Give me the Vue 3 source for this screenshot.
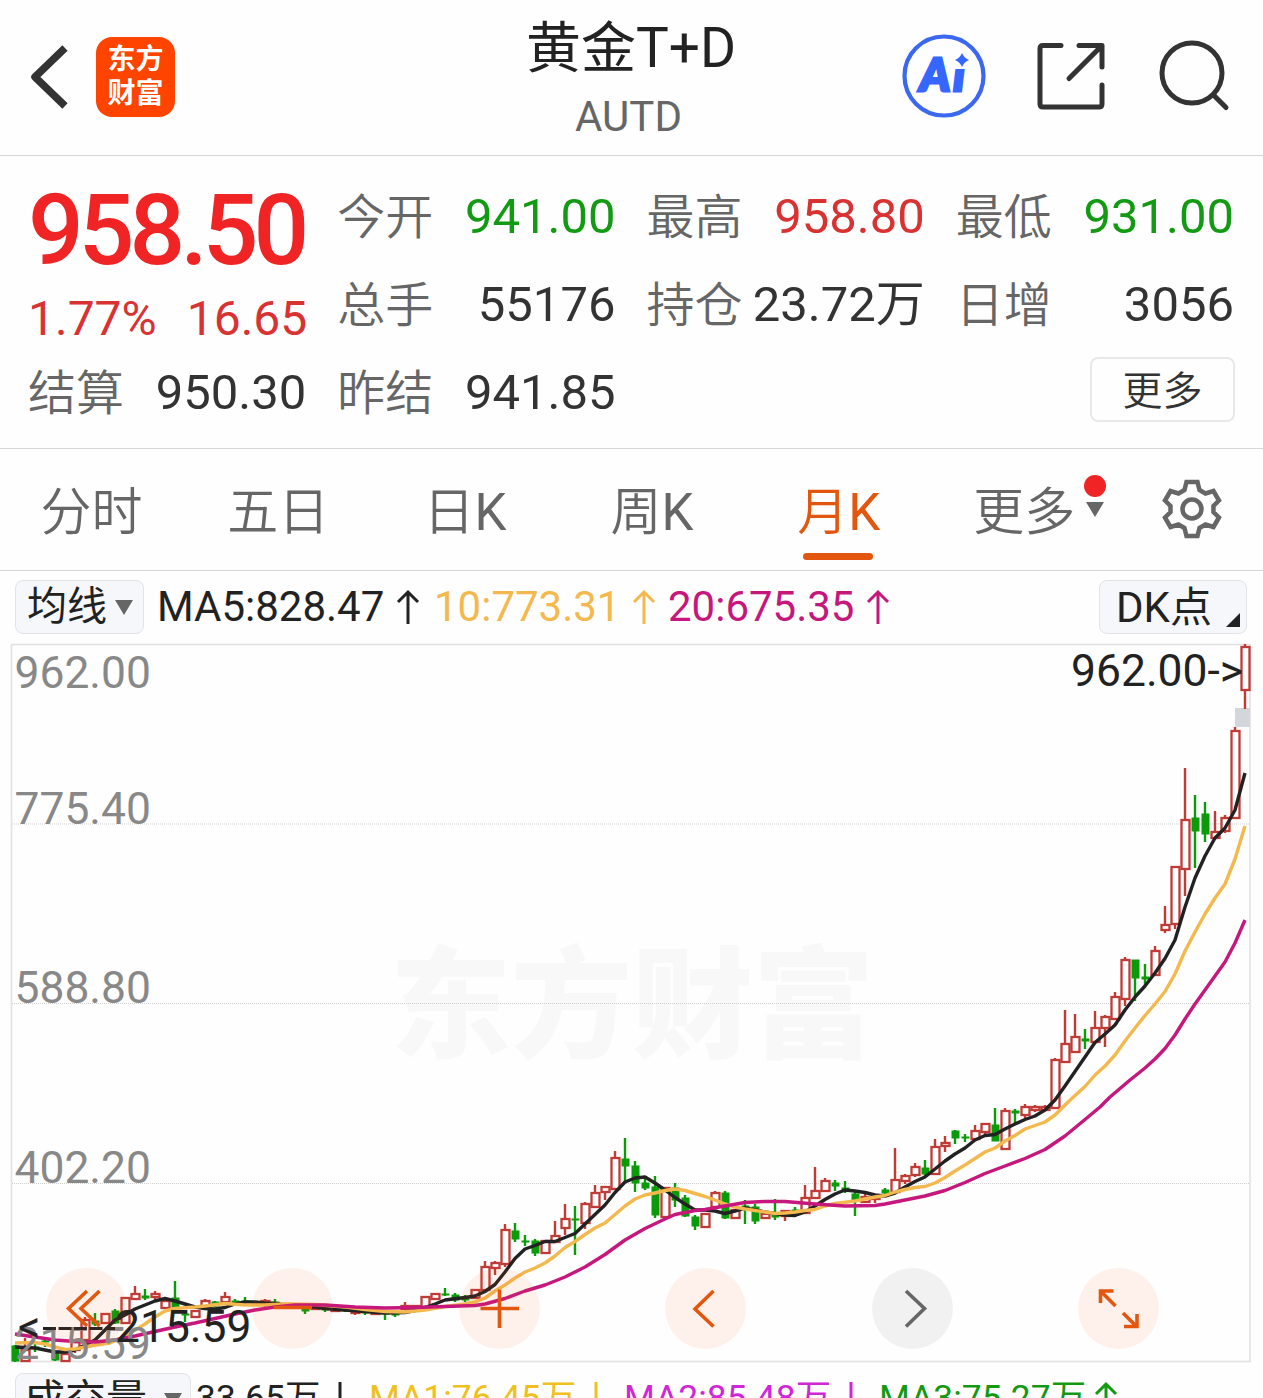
<script setup>
    import { ref } from 'vue';

    // 行情数据，color 对应下面的 class 名
    const quotes = [
        { label: '今开', value: '941.00', color: 'green' },
        { label: '最高', value: '958.80', color: 'red' },
        { label: '最低', value: '931.00', color: 'green' },
        { label: '总手', value: '55176' },
        { label: '持仓', value: '23.72万' },
        { label: '日增', value: '3056' },
        { label: '结算', value: '950.30' },
        { label: '昨结', value: '941.85' }
    ]

    // 周期：中文和字母K的字重不同，所以分开放
    const tabs = [
        { text: '分时' },
        { text: '五日' },
        { text: '日', unit: 'K' },
        { text: '周', unit: 'K' },
        { text: '月', unit: 'K' }
    ]
    const active = ref(4)

    // 纵轴刻度：文字和基线位置
    const axis = [
        { text: '962.00', y: 688 },
        { text: '775.40', y: 824 },
        { text: '588.80', y: 1003 },
        { text: '402.20', y: 1183 },
        { text: '215.59', y: 1359 }
    ]

    // K线：涨跌, 最高, 实体上沿, 实体下沿, 最低，每根间隔10
    const rows = `g 1345 1346 1361 1362|r 1338 1350 1361 1361|g 1343 1347 1348 1352|g 1338 1341 1342 1347|g 1350 1351 1360 1361
r 1353 1354 1361 1361|r 1340 1342 1350 1353|r 1317 1320 1340 1342|g 1313 1321 1324 1326|r 1313 1314 1323 1323
g 1309 1311 1323 1324|r 1297 1298 1323 1323|r 1286 1294 1299 1299|g 1289 1296 1298 1300|r 1291 1294 1297 1300
r 1301 1301 1308 1308|g 1281 1298 1307 1308|g 1312 1314 1315 1322|r 1310 1311 1317 1317|r 1299 1301 1308 1308
g 1301 1302 1306 1307|r 1292 1297 1302 1302|g 1299 1301 1304 1306|g 1297 1301 1303 1305|g 1301 1302 1304 1306
r 1299 1301 1303 1307|g 1299 1302 1304 1308|r 1303 1304 1307 1309|g 1303 1305 1307 1309|g 1304 1307 1311 1314
r 1305 1307 1309 1310|g 1305 1308 1310 1312|r 1307 1309 1311 1311|g 1307 1309 1311 1312|r 1309 1311 1313 1315
g 1309 1311 1313 1315|r 1311 1312 1314 1315|g 1311 1312 1314 1320|g 1311 1313 1315 1317|r 1302 1306 1309 1309
r 1305 1306 1308 1309|r 1297 1297 1307 1307|r 1293 1294 1299 1300|g 1288 1294 1295 1296|g 1293 1295 1300 1302
g 1295 1297 1300 1302|r 1289 1290 1298 1299|r 1261 1267 1290 1291|r 1261 1263 1268 1275|r 1224 1230 1264 1267
g 1223 1231 1239 1242|g 1235 1241 1242 1246|g 1239 1241 1253 1256|r 1241 1241 1253 1253|r 1221 1236 1242 1242
r 1204 1219 1228 1235|g 1206 1219 1220 1255|r 1202 1204 1223 1229|r 1185 1193 1207 1207|r 1187 1187 1192 1200
r 1151 1158 1189 1189|g 1138 1159 1166 1182|g 1161 1166 1183 1192|g 1177 1183 1188 1190|g 1176 1187 1215 1218
r 1188 1188 1217 1217|g 1183 1188 1200 1207|g 1195 1198 1216 1217|g 1215 1217 1226 1230|r 1213 1214 1227 1227
r 1191 1193 1207 1207|g 1191 1193 1218 1219|r 1209 1210 1218 1218|g 1200 1206 1208 1224|g 1204 1207 1221 1224
r 1213 1214 1218 1219|g 1199 1214 1217 1220|r 1210 1211 1216 1221|g 1207 1210 1214 1216|r 1185 1198 1213 1213
r 1167 1191 1198 1199|r 1178 1181 1191 1192|g 1180 1183 1186 1191|g 1181 1188 1190 1193|g 1192 1194 1200 1216
r 1192 1197 1202 1202|r 1194 1197 1199 1203|g 1188 1190 1193 1197|r 1148 1180 1192 1193|r 1174 1176 1181 1184
r 1163 1167 1175 1177|g 1160 1168 1174 1177|r 1139 1147 1174 1174|r 1136 1143 1146 1152|g 1130 1131 1138 1144
g 1134 1137 1138 1142|r 1125 1131 1139 1139|r 1123 1124 1132 1135|g 1108 1125 1141 1141|r 1108 1111 1149 1149
g 1109 1111 1113 1123|r 1104 1107 1115 1118|r 1105 1107 1110 1112|r 1105 1107 1110 1110|r 1058 1060 1108 1108
r 1010 1044 1062 1062|r 1014 1037 1052 1052|g 1029 1039 1041 1049|r 1011 1028 1042 1042|r 1015 1017 1028 1047
r 992 997 1019 1019|r 957 960 999 1006|g 960 960 978 1001|g 964 977 979 985|r 946 951 975 975
r 906 925 930 933|r 867 867 924 929|r 768 820 869 896|g 795 818 831 868|g 802 814 834 842
r 811 832 838 838|r 815 818 831 833|r 727 731 818 818|r 644 647 690 709`

    const candles = rows.split(/[|\n]/).map((row, i) => {
        const [type, ...nums] = row.trim().split(' ')
        const [high, top, bottom, low] = nums.map(Number)
        return { up: type === 'r', x: 15 + i * 10, high, top, bottom, low }
    })

    // 三条均线
    const ma5 = '15,1347 35,1348 55,1352 65,1352 75,1350 85,1345 95,1340 105,1330 115,1320 125,1315 135,1309 145,1305 155,1301 165,1298.5 175,1301 185,1304 195,1307 205,1308.5 215,1309 225,1307.5 235,1304 245,1302 255,1302 265,1303 275,1303.5 285,1305 300,1307 315,1307 325,1308.5 345,1310 365,1311.5 385,1313 405,1312.5 415,1310.5 425,1307.5 435,1304 445,1300 465,1297.5 475,1296 485,1291.5 495,1284.5 505,1272 515,1258.5 525,1249 535,1245.5 545,1241.5 555,1241.5 565,1237.5 575,1233.5 585,1224 595,1214.5 605,1205 615,1192.5 625,1182 635,1178 645,1177 655,1183 665,1190 675,1197.5 685,1204 695,1210 705,1210 715,1211 725,1213.5 735,1211 745,1208 755,1210 765,1212 785,1215 795,1215.5 805,1212 815,1206 825,1199.5 835,1194 845,1190 855,1191 865,1192.5 875,1195 885,1196 895,1193 905,1187 915,1181.5 925,1177 935,1169 945,1161 955,1154 965,1148 975,1140 985,1135.5 995,1134.5 1005,1129 1015,1124 1025,1119.5 1035,1116 1045,1110 1055,1100 1065,1086 1075,1071.5 1085,1057 1095,1042.5 1105,1034 1115,1025 1125,1010 1135,997 1145,986 1155,973 1165,958.5 1175,940 1185,907 1195,878 1205,856 1215,838 1225,828 1235,810 1245,773'
    const ma10 = '15,1343 35,1342.5 45,1344 55,1347 65,1349.5 75,1349 85,1347 95,1345 110,1343 125,1336 135,1330 145,1324 155,1317 165,1311 175,1308.5 195,1307 205,1306 225,1303.5 245,1305 265,1305 285,1304 315,1304.5 345,1307 365,1309.5 385,1311.5 405,1312 425,1310 445,1306.5 465,1304 475,1302 485,1298 495,1291 505,1285 515,1278 525,1272 535,1268 545,1263 555,1256 565,1247.5 575,1241.5 585,1234.5 595,1228 605,1223 615,1214.5 625,1206 635,1199 645,1195 655,1193 665,1190.5 675,1189 685,1190.5 695,1193.5 705,1196.5 715,1200 725,1204 735,1207 745,1209 755,1210.5 765,1212 775,1213.5 785,1213 795,1212 805,1210.5 815,1209.5 825,1206 835,1203.5 855,1201 875,1197 885,1195.5 895,1192 905,1189.5 915,1187.5 925,1186.5 935,1183 945,1177.5 955,1171 965,1165 975,1158.5 985,1152 995,1148 1005,1141 1015,1135.5 1025,1129 1035,1125.5 1045,1122 1055,1115 1065,1105 1075,1095.5 1085,1086.5 1095,1075 1105,1066 1115,1055 1125,1041 1135,1028 1145,1015.5 1155,1004 1165,991.5 1175,974 1185,951 1195,932 1205,914 1215,898 1225,884 1235,859 1245,826'
    const ma20 = '15,1334 35,1337 55,1340 75,1341.5 95,1342 115,1340 135,1336 155,1331.5 175,1327 195,1323 215,1318.5 235,1314 255,1310 275,1307 295,1305 325,1305 355,1307 385,1308 415,1307.5 445,1306.5 475,1305.5 485,1304 505,1298.5 525,1291 545,1285 565,1277 585,1267 605,1254.5 625,1240 645,1228.5 665,1219 675,1214.5 695,1210.5 705,1209.5 725,1206 745,1202.5 765,1201.5 785,1201.5 815,1204 845,1206 875,1205.5 885,1204 905,1200 925,1196 945,1190.5 965,1182.5 985,1173.5 1005,1166 1025,1158.5 1045,1149.5 1065,1136 1085,1119.5 1100,1107 1110,1097 1130,1080 1145,1068 1155,1059 1165,1048.5 1175,1035 1185,1019 1195,1004 1205,990 1215,976 1225,962 1235,943 1245,920'

    // 图表底部的操作按钮，图标画在 81x81 的格子里
    const tools = [
        { name: 'first', d: 'M41 23 L22.5 40.5 L41 58 M53.5 23 L35 40.5 L53.5 58' },
        { name: 'minus', d: 'M21.5 39.5 H60' },
        { name: 'plus', d: 'M21.5 40.5 H60 M40.5 21.5 V60' },
        { name: 'prev', d: 'M48.5 23 L30 41 L48.5 58.5' },
        { name: 'next', d: 'M34 23 L52.5 40.5 L34 58.5', gray: true },
        { name: 'full', d: 'M22.5 35 V23 H35.5 M23 23.5 L37.5 38 M45 45 L58.5 58.5 M59 46 V58.5 H46' }
    ]

    const volumes = [
        { text: '33.65万', color: 'dark' },
        { text: 'MA1:76.45万', color: 'gold' },
        { text: 'MA2:85.48万', color: 'violet' },
        { text: 'MA3:75.27万', color: 'green', up: true }
    ]
</script>


<template>
    <div class="page">
        <!-- 顶部标题栏 -->
        <header class="header">
            <div class="left">
                <svg class="back" width="48" height="80" viewBox="0 0 48 80">
                    <path d="M45 11 L15 40 L45 69" fill="none" stroke="#333" stroke-width="7.5" stroke-linejoin="round"/>
                </svg>
                <div class="logo"><span>东方</span><span>财富</span></div>
            </div>
            <div class="title">
                <div class="name">黄金T+D</div>
                <div class="code">AUTD</div>
            </div>
            <div class="actions">
                <svg width="84" height="84" viewBox="0 0 84 84">
                    <text class="ai" x="18" y="57">Ai</text>
                    <rect x="51" y="14" width="19" height="21" fill="#fefefe"/>
                    <path d="M60 19 Q62 24 67 26 Q62 28 60 33 Q58 28 53 26 Q58 24 60 19z" fill="#3566ff"/>
                    <circle cx="42" cy="42" r="39.5" fill="none" stroke="#3a68f0" stroke-width="4.2"/>
                </svg>
                <svg class="share" width="72" height="72" viewBox="0 0 72 72">
                    <path d="M26 5.5 H8 Q5 5.5 5 8.5 V64 Q5 67 8 67 H64 Q67 67 67 64 V45 M44 5.5 H67 V27 M66 6.5 L34 38.5" fill="none" stroke="#333" stroke-width="5" stroke-linecap="round" stroke-linejoin="round"/>
                </svg>
                <svg class="search" width="74" height="74" viewBox="0 0 74 74">
                    <circle cx="36" cy="34" r="30" fill="none" stroke="#333" stroke-width="5"/>
                    <path d="M57.5 56 L70 68.5" stroke="#333" stroke-width="5" stroke-linecap="round"/>
                </svg>
            </div>
        </header>

        <!-- 行情面板 -->
        <section class="quote">
            <div class="price">
                <div class="big">958.50</div>
                <div class="change"><span>1.77%</span><span>16.65</span></div>
            </div>
            <div v-for="item in quotes" :key="item.label" class="cell">
                <span class="label">{{ item.label }}</span>
                <span :class="['value', item.color]">{{ item.value }}</span>
            </div>
            <div class="more"><button>更多</button></div>
        </section>

        <!-- 周期切换 -->
        <nav class="tabs">
            <div v-for="(tab,index) in tabs" :key="index" :class="index === active ? 'tab active' : 'tab'" @click="active = index">{{ tab.text }}<span v-if="tab.unit" class="unit">{{ tab.unit }}</span></div>
            <div class="tab-more">
                <span>更多</span>
                <div class="marks">
                    <i class="dot"></i>
                    <i class="triangle"></i>
                </div>
            </div>
            <svg class="gear" width="64" height="64" viewBox="1159.5 477.5 64 64">
                <path d="M1186 482.5H1197L1199 490.5L1205 494L1213 491.5L1218.5 501L1213 506.5V512.5L1218.5 518L1213 527.5L1205 525L1199 528.5L1197 536.5H1186L1184 528.5L1178 525L1170 527.5L1164.5 518L1170 512.5V506.5L1164.5 501L1170 491.5L1178 494L1184 490.5Z" fill="none" stroke="#666" stroke-width="4.5"/>
                <circle cx="1191.5" cy="509.5" r="9.5" fill="none" stroke="#666" stroke-width="4.5"/>
            </svg>
        </nav>

        <!-- 均线数值 -->
        <div class="ma-bar">
            <div class="select">均线<i class="triangle"></i></div>
            <div class="ma dark">
                <span>MA5:828.47</span>
                <svg width="24" height="36" viewBox="0 0 24 36"><path d="M12 35V3M2 13L12 3L22 13"/></svg>
            </div>
            <div class="ma yellow">
                <span>10:773.31</span>
                <svg width="24" height="36" viewBox="0 0 24 36"><path d="M12 35V3M2 13L12 3L22 13"/></svg>
            </div>
            <div class="ma pink">
                <span>20:675.35</span>
                <svg width="24" height="36" viewBox="0 0 24 36"><path d="M12 35V3M2 13L12 3L22 13"/></svg>
            </div>
            <div class="dk">DK点<i class="corner"></i></div>
        </div>

        <!-- K线图 -->
        <div class="chart">
            <svg width="1263" height="720" viewBox="0 643 1263 720">
                <text class="watermark" x="390" y="1048" textLength="484">东方财富</text>
                <path d="M12 824H1250M12 1003.5H1250M12 1183.5H1250" stroke="#cfcfcf" stroke-dasharray="1 1"/>
                <rect x="11.5" y="644.5" width="1238.5" height="717" fill="none" stroke="#e2e2e2" stroke-width="1.6"/>
                <rect x="1235" y="708" width="15" height="19" fill="#d3d6db"/>
                <g v-for="c in candles" :key="c.x">
                    <template v-if="c.up">
                        <path :d="`M${c.x} ${c.high}V${c.top}M${c.x} ${c.bottom}V${c.low}`" stroke="#c03a36" stroke-width="2.4"/>
                        <rect :x="c.x - 3.5" :y="c.top" width="8" :height="c.bottom - c.top" fill="#fefefe" stroke="#c03a36" stroke-width="2.3"/>
                    </template>
                    <template v-else>
                        <path :d="`M${c.x} ${c.high}V${c.low}`" stroke="#0a9a0a" stroke-width="2.4"/>
                        <rect :x="c.x - 3.5" :y="c.top - 0.5" width="8" :height="c.bottom - c.top + 1" fill="#0a9a0a"/>
                    </template>
                </g>
                <g class="lines">
                    <polyline :points="ma5" stroke="#222"/>
                    <polyline :points="ma10" stroke="#f3b94e"/>
                    <polyline :points="ma20" stroke="#c5177c"/>
                </g>
                <text v-for="a in axis" :key="a.text" class="axis" x="14.5" :y="a.y">{{ a.text }}</text>
                <text class="peak" x="1243" y="686" text-anchor="end">962.00-&gt;</text>
                <text class="peak" x="18" y="1342">&lt;</text>
                <path d="M43 1328.5H115" stroke="#222" stroke-width="3" stroke-dasharray="13 2.5"/>
                <text class="peak" x="115" y="1342">215.59</text>
            </svg>
            <div class="tools">
                <div v-for="t in tools" :key="t.name" :class="t.gray ? 'tool gray' : 'tool'">
                    <svg width="81" height="81" viewBox="0 0 81 81"><path :d="t.d"/></svg>
                </div>
            </div>
        </div>

        <!-- 成交量 -->
        <div class="volume">
            <div class="select">成交量<i class="triangle"></i></div>
            <div v-for="v in volumes" :key="v.text" :class="['vol', v.color]">
                <span>{{ v.text }}</span>
                <svg width="24" height="36" viewBox="0 0 24 36">
                    <path :d="v.up ? 'M12 35V3M2 13L12 3L22 13' : 'M12 1V33M2 23L12 33L22 23'"/>
                </svg>
            </div>
        </div>
    </div>
</template>


<style>
    body{
        background: #fefefe;
    }
</style>

<style scoped>
    .page{
        width: 1263px;
        height: 1398px;
        overflow: hidden;
        background: #fefefe;
        color: #333;
        font-family: Roboto, "Noto Sans CJK SC", sans-serif;
    }
    .header{
        display: flex;
        justify-content: space-between;
        height: 155px;
        border-bottom: 1px solid #d6d6d6;
    }
    .left{
        display: flex;
        width: 360px;
        padding: 37px 0 0 20px;
        box-sizing: border-box;
    }
    .logo{
        display: flex;
        flex-direction: column;
        justify-content: center;
        align-items: center;
        width: 79px;
        height: 80px;
        margin-left: 28px;
        border-radius: 16px;
        background: #ff4400;
        color: #fff;
        font-size: 28px;
        font-weight: 700;
        line-height: 34px;
    }
    .title{
        text-align: center;
    }
    .name{
        margin-top: 12px;
        font-size: 55px;
        font-weight: 370;
        line-height: 72px;
        color: #222;
    }
    .code{
        margin-top: 8px;
        font-size: 42px;
        line-height: 50px;
        color: #666;
        margin-right: 5px;
    }
    .actions{
        display: flex;
        width: 361px;
        padding-top: 34px;
    }
    .share{
        margin: 6px 0 0 49px;
    }
    .search{
        margin: 5px 0 0 49px;
    }
    .ai{
        font-family: Lato, sans-serif;
        font-size: 46px;
        font-weight: 900;
        font-style: italic;
        letter-spacing: 3px;
        fill: #3566ff;
        stroke: #3566ff;
        stroke-width: 3;
    }
    .quote{
        display: grid;
        grid-template-columns: repeat(4, minmax(0, 1fr));
        grid-template-rows: repeat(3, 88px);
        column-gap: 31px;
        height: 293px;
        padding: 17px 29px 0 28px;
        box-sizing: border-box;
        border-bottom: 1px solid #d6d6d6;
    }
    .price{
        grid-row: span 2;
    }
    .big{
        margin-top: 8px;
        font-size: 98px;
        font-weight: 550;
        line-height: 100px;
        letter-spacing: -4.9px;
        color: #f02424;
    }
    .change{
        display: flex;
        justify-content: space-between;
        margin: 8px -1px 0 0;
        font-size: 48px;
        line-height: 60px;
        color: #d93232;
    }
    .cell{
        display: flex;
        justify-content: space-between;
        line-height: 88px;
        white-space: nowrap;
    }
    .label{
        padding-top: 1px;
        font-size: 48px;
        font-weight: 350;
        color: #666;
    }
    .value{
        font-size: 49px;
    }
    .value.red{
        color: #d93232;
    }
    .green{
        color: #129a12;
    }
    .more{
        grid-column: 4;
        display: flex;
        justify-content: flex-end;
        align-items: flex-start;
        padding-top: 8px;
        margin-right: -1px;
    }
    .more button{
        width: 145px;
        height: 65px;
        padding: 0 0 4px;
        border: 2px solid #e8e8ea;
        border-radius: 8px;
        background: #fefefe;
        color: #333;
        font-family: inherit;
        font-size: 40px;
        font-weight: 350;
    }
    .tabs{
        display: flex;
        height: 122px;
        padding-right: 39px;
        margin-left: -2px;
        box-sizing: border-box;
        font-size: 51px;
        font-weight: 350;
        line-height: 127px;
        color: #666;
        border-bottom: 1px solid #d6d6d6;
    }
    .tab{
        position: relative;
        width: 187px;
        text-align: center;
        cursor: pointer;
    }
    .unit{
        font-weight: 400;
    }
    .active{
        color: #e2570d;
    }
    .active::after{
        content: '';
        position: absolute;
        left: 58px;
        bottom: 10px;
        width: 70px;
        height: 7px;
        border-radius: 4px;
        background: #e2570d;
    }
    .tab-more{
        display: flex;
        width: 228px;
        padding-left: 41px;
        box-sizing: border-box;
    }
    .marks{
        display: flex;
        flex-direction: column;
        align-items: center;
        gap: 5px;
        padding: 26px 0 0 9px;
    }
    .dot{
        width: 22px;
        height: 22px;
        border-radius: 50%;
        background: #f02424;
    }
    .triangle{
        width: 0;
        height: 0;
        border: 9px solid transparent;
        border-top: 15px solid #666;
        border-bottom: 0;
    }
    .gear{
        margin-top: 28px;
    }
    .ma-bar{
        display: flex;
        height: 73px;
        padding: 9px 16px 0 15px;
        box-sizing: border-box;
        font-size: 42px;
        line-height: 54px;
    }
    .select{
        display: flex;
        align-items: center;
        justify-content: space-between;
        width: 129px;
        height: 54px;
        padding: 0 10px 0 11px;
        box-sizing: border-box;
        border: 1.5px solid #e1e3e7;
        border-radius: 8px;
        background: #f6f7fa;
        color: #222;
        font-size: 40px;
        font-weight: 370;
        line-height: 56px;
    }
    .ma, .vol{
        display: flex;
        align-items: center;
        height: 54px;
        white-space: nowrap;
    }
    .ma svg, .vol svg{
        fill: none;
        stroke: currentColor;
        stroke-width: 3;
    }
    .ma svg{
        margin-left: 12px;
    }
    .dark{
        width: 277px;
        margin-left: 13px;
        color: #222;
    }
    .yellow{
        width: 234px;
        color: #f3b94e;
    }
    .pink{
        color: #c5177c;
    }
    .dk{
        position: relative;
        width: 148px;
        height: 54px;
        margin-left: auto;
        padding-left: 16px;
        box-sizing: border-box;
        border: 1.5px solid #e1e3e7;
        border-radius: 8px;
        background: #f6f7fa;
        color: #222;
        line-height: 53px;
    }
    .corner{
        position: absolute;
        right: 6px;
        bottom: 6px;
        border-left: 14px solid transparent;
        border-bottom: 14px solid #222;
    }
    .chart{
        position: relative;
        height: 720px;
        margin-top: -1px;
    }
    .chart > svg{
        display: block;
    }
    .watermark{
        font-size: 121px;
        font-weight: 900;
        fill: #f8f8f8;
    }
    .lines polyline{
        fill: none;
        stroke-width: 3.4;
        stroke-linejoin: round;
    }
    .axis{
        font-size: 44.4px;
        fill: #888;
    }
    .peak{
        font-size: 44.4px;
        fill: #222;
    }
    .tools{
        position: absolute;
        left: 45.5px;
        right: 104px;
        bottom: 14px;
        display: flex;
        justify-content: space-between;
    }
    .tool{
        width: 81px;
        height: 81px;
        border-radius: 50%;
        background: rgba(255, 92, 20, 0.08);
    }
    .tool path{
        fill: none;
        stroke: #e2570d;
        stroke-width: 3.6;
    }
    .tool.gray{
        background: rgba(0, 0, 0, 0.05);
    }
    .gray path{
        stroke: #666;
    }
    .volume{
        display: flex;
        height: 54px;
        padding: 10px 0 0 15px;
        font-size: 35.4px;
    }
    .volume .select{
        width: 176px;
        padding: 0 8px;
        font-size: 41px;
    }
    .vol{
        width: 255px;
        height: 43px;
        margin: 0;
    }
    .vol svg{
        margin: 8px 0 0 8px;
    }
    .vol.dark{
        width: 173px;
        margin-left: 5px;
    }
    .gold{
        color: #efc020;
    }
    .violet{
        color: #cf26d6;
    }
</style>
